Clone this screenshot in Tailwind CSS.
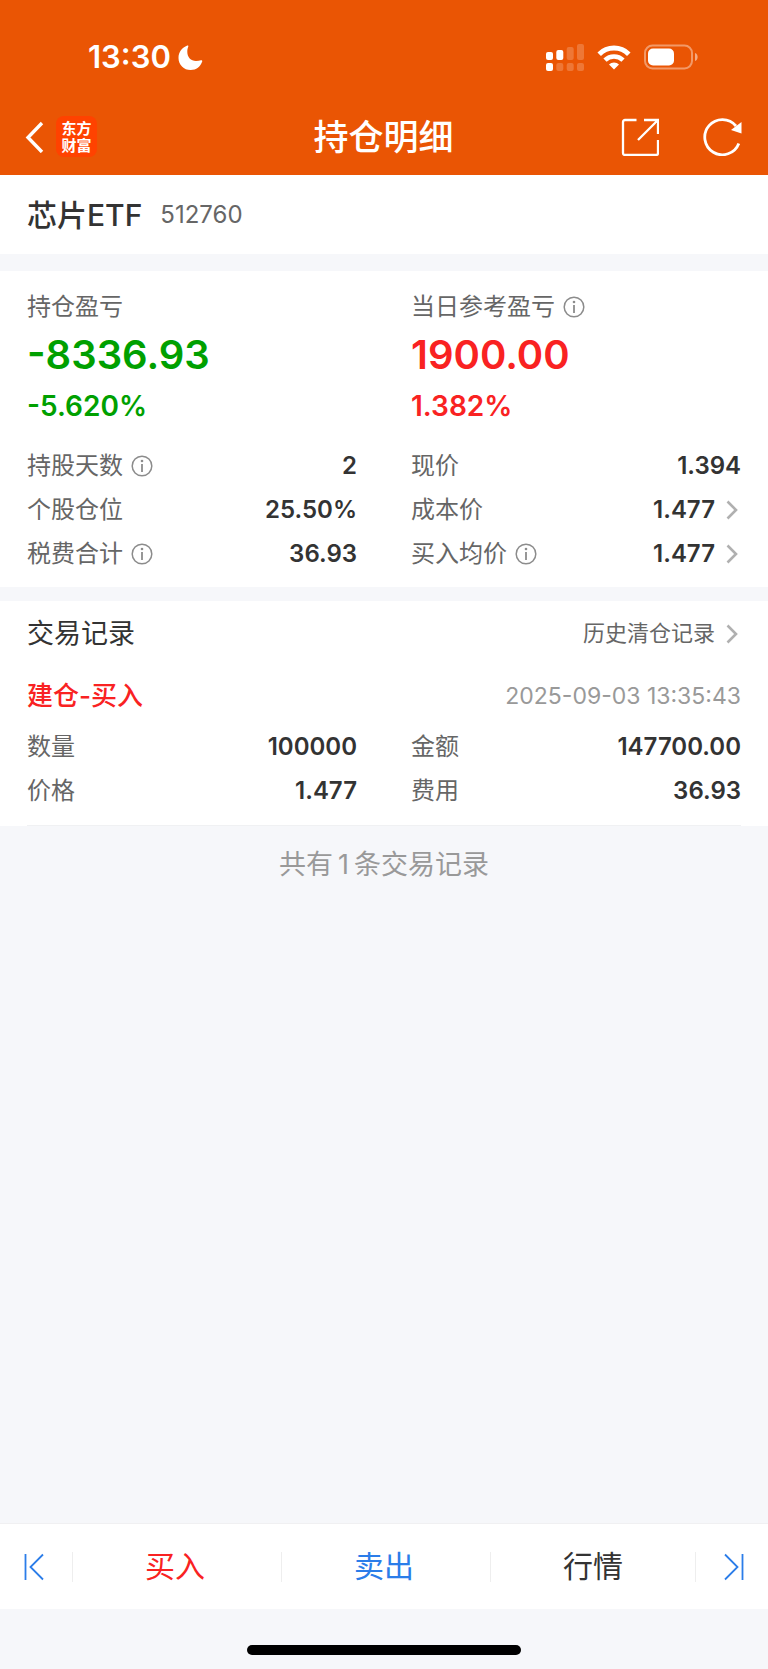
<!DOCTYPE html>
<html lang="zh-CN">
<head>
  <meta charset="UTF-8">
  <meta name="viewport" content="width=device-width, initial-scale=1.0">
  <title>持仓明细</title>
  <script src="https://cdn.jsdelivr.net/npm/@tailwindcss/browser@4"></script>
</head>
<body class="flex min-h-screen flex-col bg-[#f6f7fa] font-['Inter','Noto_Sans_CJK_SC',sans-serif] text-2xl text-[#333]">

  <!-- icons used more than once -->
  <svg class="hidden">
    <symbol id="info" viewBox="0 0 22 22">
      <circle cx="11" cy="11" r="9.800" fill="none" stroke="#8c8c8c" stroke-width="1.500"/>
      <path d="M11 9v8" stroke="#8c8c8c" stroke-width="1.800"/>
      <circle cx="11" cy="6" r="1.300" fill="#8c8c8c"/>
    </symbol>
    <symbol id="arrow" viewBox="0 0 26 20">
      <path d="M12.500 1.500 21 10l-8.500 8.500" fill="none" stroke="#b0b0b0" stroke-width="2.600"/>
    </symbol>
  </svg>

  <header class="bg-[#ea5504] text-white">
    <!-- status bar -->
    <div class="flex h-[98px] items-center justify-between pt-4 pr-[70px] pl-[88px]">
      <div class="flex items-center gap-[7px]">
        <span class="text-[31px] leading-10 font-semibold">13:30</span>
        <svg class="size-[25px]" viewBox="0 0 25 25" fill="currentColor">
          <path d="M9.300.6C10 .3 10.600.9 10.300 1.600 9.500 3.500 9.300 5.200 9.300 7c0 5 3.500 9 8.700 9 1.900 0 3.500-.2 5-.7.900-.3 1.500.4 1.200 1.200C22.500 21.600 18.200 25 12.700 25 5.800 25 .5 19.700.5 12.900.5 7.300 4 2.700 9.300.6Z"/>
        </svg>
      </div>
      <div class="flex items-center gap-[13px]">
        <svg class="h-[27px] w-[38px]" viewBox="0 0 38 27" fill="currentColor">
          <rect x="0" y="8" width="7" height="8" rx="2"/>
          <rect x="10.300" y="6" width="7" height="10" rx="2"/>
          <rect x="20.700" y="3" width="7" height="13" rx="2" opacity=".2"/>
          <rect x="31" y="0" width="7" height="16" rx="2" opacity=".2"/>
          <rect x="0" y="19" width="7" height="8" rx="2"/>
          <rect x="10.300" y="19" width="7" height="8" rx="2" opacity=".2"/>
          <rect x="20.700" y="19" width="7" height="8" rx="2" opacity=".2"/>
          <rect x="31" y="19" width="7" height="8" rx="2" opacity=".2"/>
        </svg>
        <svg class="h-[25px] w-[34px]" viewBox="0 0 34 25" fill="none" stroke="currentColor" stroke-width="5">
          <path d="M2.200 9.200a21 21 0 0 1 29.600 0"/>
          <path d="M8 15.200a12.800 12.800 0 0 1 18 0" stroke-width="4.600"/>
          <path d="M17 24.500l-5-5a7 7 0 0 1 10 0z" fill="currentColor" stroke="none"/>
        </svg>
        <svg class="h-[26px] w-[54px]" viewBox="0 0 54 26">
          <rect x="1" y="1.500" width="47" height="23" rx="7.500" fill="none" stroke="#fff" stroke-opacity=".4" stroke-width="2"/>
          <rect x="4" y="4.500" width="26" height="17" rx="5" fill="#fff"/>
          <path d="M51 9c3.500 1 3.500 7 0 8z" fill="#fff" fill-opacity=".5"/>
        </svg>
      </div>
    </div>

    <!-- nav bar -->
    <div class="grid h-[77px] grid-cols-[1fr_auto_1fr] items-center pr-[26px] pl-[25px]">
      <div class="flex items-center gap-3">
        <button aria-label="返回">
          <svg class="h-8 w-[19px]" viewBox="0 0 19 32" fill="none" stroke="currentColor" stroke-width="3.400">
            <path d="M17 2 3 16.500 17 31"/>
          </svg>
        </button>
        <div class="flex size-[41px] flex-col items-center justify-center rounded-lg bg-[#ff4200] text-[15px] leading-[17px] font-bold">
          <span>东方</span>
          <span>财富</span>
        </div>
      </div>
      <h1 class="text-[35px] leading-[48px] font-medium">持仓明细</h1>
      <div class="flex items-center justify-end gap-11">
        <button aria-label="分享">
          <svg class="size-[38px]" viewBox="0 0 38 38" fill="none" stroke="currentColor" stroke-width="2.300">
            <path d="M15.500 2H4a2 2 0 0 0-2 2v31a2 2 0 0 0 2 2h31a2 2 0 0 0 2-2V22"/>
            <path d="M23 2h14v14M37 2 17 22"/>
          </svg>
        </button>
        <button aria-label="刷新">
          <svg class="size-[39px]" viewBox="0 0 39 39">
            <path d="M35.800 26.500A17.600 17.600 0 1 1 33 9" fill="none" stroke="currentColor" stroke-width="2.800"/>
            <path d="M38.500 5v11.500L28 13z" fill="currentColor"/>
          </svg>
        </button>
      </div>
    </div>
  </header>

  <main class="flex-1">
    <section class="flex h-[79px] items-center gap-[18px] bg-white px-[27px]">
      <h2 class="text-[30px] leading-10 font-medium">芯片ETF</h2>
      <span class="text-[#666]">512760</span>
    </section>

    <!-- profit and loss -->
    <section class="mt-[17px] bg-white px-[27px] pt-[18px] pb-[11px]">
      <div class="grid grid-cols-2 gap-x-[54px]">
        <div class="text-[#00a000]">
          <div class="leading-9 text-[#666]">持仓盈亏</div>
          <div class="text-[40px] leading-[60px] font-semibold">-8336.93</div>
          <div class="text-[28px] leading-[42px] font-semibold">-5.620%</div>
        </div>
        <div class="text-[#f92222]">
          <div class="flex items-center gap-2 leading-9 text-[#666]">当日参考盈亏
            <button aria-label="说明"><svg class="size-[22px]"><use href="#info"/></svg></button>
          </div>
          <div class="text-[40px] leading-[60px] font-semibold">1900.00</div>
          <div class="text-[28px] leading-[42px] font-semibold">1.382%</div>
        </div>
      </div>

      <dl class="mt-[17px] grid grid-cols-2 gap-x-[54px] leading-[44px]">
        <div class="flex justify-between">
          <dt class="flex items-center gap-2 text-[#666]">持股天数
            <button aria-label="说明"><svg class="size-[22px]"><use href="#info"/></svg></button>
          </dt>
          <dd class="font-semibold">2</dd>
        </div>
        <div class="flex justify-between">
          <dt class="text-[#666]">现价</dt>
          <dd class="font-semibold">1.394</dd>
        </div>
        <div class="flex justify-between">
          <dt class="text-[#666]">个股仓位</dt>
          <dd class="font-semibold">25.50%</dd>
        </div>
        <div class="flex justify-between">
          <dt class="text-[#666]">成本价</dt>
          <dd class="font-semibold">
            <a href="#" class="flex items-center">1.477<svg class="h-5 w-[26px]"><use href="#arrow"/></svg></a>
          </dd>
        </div>
        <div class="flex justify-between">
          <dt class="flex items-center gap-2 text-[#666]">税费合计
            <button aria-label="说明"><svg class="size-[22px]"><use href="#info"/></svg></button>
          </dt>
          <dd class="font-semibold">36.93</dd>
        </div>
        <div class="flex justify-between">
          <dt class="flex items-center gap-2 text-[#666]">买入均价
            <button aria-label="说明"><svg class="size-[22px]"><use href="#info"/></svg></button>
          </dt>
          <dd class="font-semibold">
            <a href="#" class="flex items-center">1.477<svg class="h-5 w-[26px]"><use href="#arrow"/></svg></a>
          </dd>
        </div>
      </dl>
    </section>

    <!-- trade records -->
    <section class="mt-[14px] bg-white px-[27px]">
      <div class="flex h-[66px] items-center justify-between">
        <h2 class="text-[27px]">交易记录</h2>
        <a href="#" class="flex items-center text-[22px] text-[#666]">历史清仓记录<svg class="h-5 w-[26px]"><use href="#arrow"/></svg></a>
      </div>
      <div class="border-b border-[#f0f1f3] pb-3">
        <div class="flex h-[58px] items-center justify-between">
          <h3 class="text-[26px] font-medium text-[#f92222]">建仓-买入</h3>
          <time class="text-[23px] text-[#999]">2025-09-03 13:35:43</time>
        </div>
        <dl class="grid grid-cols-2 gap-x-[54px] leading-[44px]">
          <div class="flex justify-between">
            <dt class="text-[#666]">数量</dt>
            <dd class="font-semibold">100000</dd>
          </div>
          <div class="flex justify-between">
            <dt class="text-[#666]">金额</dt>
            <dd class="font-semibold">147700.00</dd>
          </div>
          <div class="flex justify-between">
            <dt class="text-[#666]">价格</dt>
            <dd class="font-semibold">1.477</dd>
          </div>
          <div class="flex justify-between">
            <dt class="text-[#666]">费用</dt>
            <dd class="font-semibold">36.93</dd>
          </div>
        </dl>
      </div>
    </section>
    <p class="text-center text-[27px] leading-[78px] text-[#999]">共有<span class="mx-[5px]">1</span>条交易记录</p>
  </main>

  <footer>
    <nav class="flex h-[86px] items-center border-t border-[#f0f0f2] bg-white text-[30px]">
      <button class="flex h-[30px] w-[73px] items-center border-r border-[#eee] pl-6" aria-label="上一个">
        <svg class="h-7 w-5" viewBox="0 0 20 28" fill="none" stroke="#2b7de9" stroke-width="1.800">
          <path d="M1.500 1v26M19 1.500 6.500 14 19 26.500"/>
        </svg>
      </button>
      <button class="flex h-[30px] flex-1 items-center justify-center border-r border-[#eee] pr-1 text-[#f92222]">买入</button>
      <button class="flex h-[30px] flex-1 items-center justify-center border-r border-[#eee] pr-1 text-[#2b7de9]">卖出</button>
      <button class="flex h-[30px] flex-1 items-center justify-center border-r border-[#eee]">行情</button>
      <button class="flex h-[30px] w-[72px] items-center justify-end pr-6" aria-label="下一个">
        <svg class="h-7 w-5" viewBox="0 0 20 28" fill="none" stroke="#2b7de9" stroke-width="1.800">
          <path d="M18.500 1v26M1 1.500 13.500 14 1 26.500"/>
        </svg>
      </button>
    </nav>
    <!-- home indicator -->
    <div class="flex h-[60px] justify-center pt-9">
      <div class="h-[10px] w-[274px] rounded-full bg-black"></div>
    </div>
  </footer>
</body>
</html>
